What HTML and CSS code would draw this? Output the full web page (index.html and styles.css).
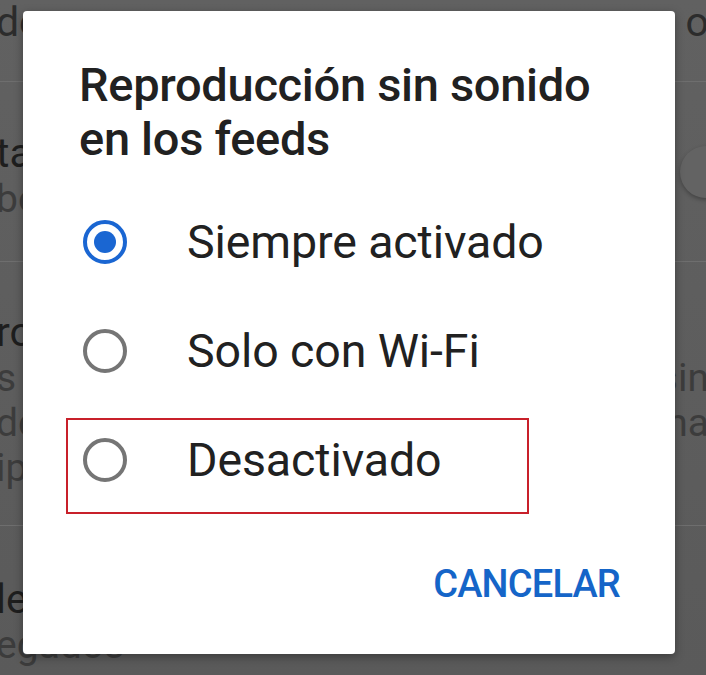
FILE: index.html
```html
<!DOCTYPE html>
<html lang="es">
<head>
<meta charset="utf-8">
<title>Reproducción sin sonido</title>
<link rel="stylesheet" href="styles.css">
</head>
<body>
<div class="screen">
  <div class="settings">
    <div class="row row-top">
      <div class="line title"><span>de</span><span>o</span></div>
    </div>
    <div class="row row-toggle">
      <div class="line title"><span>ta</span></div>
      <div class="line sub"><span>bo</span></div>
      <div class="knob"></div>
    </div>
    <div class="row row-multi">
      <div class="line title"><span>ro</span></div>
      <div class="line sub"><span>s</span><span>sin</span></div>
      <div class="line sub"><span>dc</span><span>na</span></div>
      <div class="line sub"><span>ip</span></div>
    </div>
    <div class="row row-last">
      <div class="line title"><span>le</span></div>
      <div class="line sub"><span>egados</span></div>
    </div>
  </div>

  <div class="dialog" role="dialog" aria-labelledby="dlg-title">
    <h1 class="dialog-title" id="dlg-title">Reproducción sin sonido en los feeds</h1>
    <ul class="options">
      <li class="option">
        <span class="radio radio-on"><span class="dot"></span></span>
        <span class="label">Siempre activado</span>
      </li>
      <li class="option">
        <span class="radio"></span>
        <span class="label">Solo con Wi-Fi</span>
      </li>
      <li class="option option-marked">
        <span class="radio"></span>
        <span class="label">Desactivado</span>
      </li>
    </ul>
    <div class="actions">
      <span class="btn">CANCELAR</span>
    </div>
  </div>
</div>
</body>
</html>
```
FILE: styles.css
```css
html, body {
  margin: 0;
  padding: 0;
}
body {
  width: 706px;
  height: 675px;
  overflow: hidden;
  font-family: Roboto, "Noto Sans", sans-serif;
  background: #5c5c5c;
}
.screen {
  position: relative;
  width: 706px;
  height: 675px;
  overflow: hidden;
  background: linear-gradient(#616161, #5a5a5a);
}
.settings {
  display: flex;
  flex-direction: column;
}
.row {
  position: relative;
  border-bottom: 1px solid #6e6e6e;
  display: flex;
  flex-direction: column;
}
.row-top {
  height: 81px;
}
.row-toggle {
  height: 180px;
  padding-top: 47px;
  box-sizing: border-box;
}
.row-multi {
  height: 264px;
  padding-top: 46px;
  box-sizing: border-box;
}
.row-last {
  border-bottom: none;
  padding-top: 49px;
}
.line {
  display: flex;
  justify-content: space-between;
  white-space: nowrap;
  margin-left: -4px;
  margin-right: -3px;
}
.title {
  font-size: 41px;
  line-height: 48px;
  color: #1e1e1e;
}
.sub {
  font-size: 39px;
  line-height: 45px;
  color: #3c3c3c;
}
.row-top .title {
  line-height: 44px;
  color: #2c2c2c;
}
.knob {
  position: absolute;
  right: -26px;
  top: 64px;
  width: 52px;
  height: 52px;
  border-radius: 50%;
  background: #636363;
  box-shadow: 0 2px 4px rgba(0,0,0,0.3);
}

.dialog {
  position: absolute;
  left: 23px;
  top: 11px;
  width: 652px;
  height: 643px;
  box-sizing: border-box;
  background: #ffffff;
  border-radius: 4px;
  box-shadow: 0 3px 10px rgba(0,0,0,0.35);
  padding: 47px 0 0 56px;
  display: flex;
  flex-direction: column;
}
.dialog-title {
  margin: 0;
  font-family: Roboto, sans-serif;
  font-weight: 500;
  font-size: 47px;
  line-height: 54px;
  color: #212121;
  width: 540px;
  letter-spacing: -0.3px;
}
.options {
  list-style: none;
  margin: 0;
  padding: 0;
  margin-top: 21px;
  display: flex;
  flex-direction: column;
}
.option {
  position: relative;
  height: 109px;
  display: flex;
  align-items: center;
}
.radio {
  width: 44px;
  height: 44px;
  box-sizing: border-box;
  border-radius: 50%;
  border: 4.5px solid #757575;
  margin-left: 4px;
  display: flex;
  align-items: center;
  justify-content: center;
  flex: none;
}
.radio-on {
  border-color: #1a66d2;
}
.dot {
  width: 22px;
  height: 22px;
  border-radius: 50%;
  background: #1a66d2;
}
.label {
  margin-left: 60px;
  font-size: 46.5px;
  color: #212121;
  letter-spacing: -0.1px;
}
.option-marked::after {
  content: "";
  position: absolute;
  left: -13px;
  top: 13px;
  width: 463px;
  height: 96px;
  box-sizing: border-box;
  border: 2px solid #c8202a;
}
.actions {
  display: flex;
  justify-content: flex-end;
  padding-right: 55px;
  margin-top: 50px;
}
.btn {
  font-weight: 500;
  font-size: 38px;
  letter-spacing: -0.8px;
  color: #1565c8;
  line-height: 40px;
}
```
